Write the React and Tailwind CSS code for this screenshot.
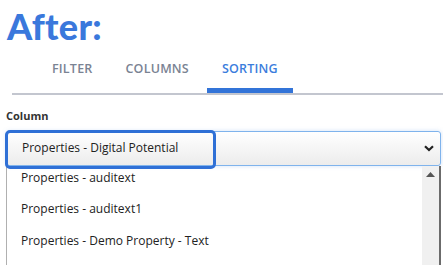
import React from "react";

const options = [
  "Properties - auditext",
  "Properties - auditext1",
  "Properties - Demo Property - Text",
];

function Tab({ label, active }) {
  return (
    <div className="relative px-[15px] h-[43px] pt-[10px]">
      <span
        className={`block leading-[17px] text-[12.5px] font-semibold tracking-[0.2px] ${
          active ? "text-[#3b7ddd]" : "text-[#7a8393]"
        }`}
      >
        {label}
      </span>
      {active && (
        <div className="absolute left-0 right-0 bottom-0 h-[5px] bg-[#3374d8]" />
      )}
    </div>
  );
}

export default function App() {
  return (
    <div
      className="w-[443px] h-[265px] bg-white overflow-hidden relative"
      style={{ fontFamily: '"Open Sans", "Noto Sans", sans-serif' }}
    >
      <h1
        className="pl-[7px] pt-[8px] h-[50px] text-[36px] leading-[36px] font-black text-[#3a78dc] tracking-[0.3px]"
        style={{ fontFamily: 'Lato, "Open Sans", sans-serif' }}
      >
        After:
      </h1>

      <div className="ml-[12px] border-b-2 border-[#c3c6cf] flex pl-[25px] gap-[3px]">
        <Tab label="FILTER" />
        <Tab label="COLUMNS" />
        <Tab label="SORTING" active />
      </div>

      <div className="pl-[6px] pr-[2px] pt-[14px]">
        <div className="text-[11px] font-bold text-[#333] leading-[14px]">
          Column
        </div>

        <div className="relative mt-[8px]">
          <div className="h-[35px] border border-[#7fb3ec] rounded-[3px] bg-gradient-to-b from-white to-[#ececec] flex items-center justify-between pl-[15px] pr-[6px] shadow-[0_0_4px_rgba(120,170,230,0.35)]">
            <span className="text-[12px] text-[#222] -mt-[2px]">
              Properties - Digital Potential
            </span>
            <svg width="10" height="7" viewBox="0 0 10 7">
              <path
                d="M1 1.2 L5 5 L9 1.2"
                fill="none"
                stroke="#222"
                strokeWidth="2.2"
              />
            </svg>
          </div>
          <div className="absolute left-[-1px] top-[-1px] w-[211px] h-[39px] border-[3px] border-[#2f70d6] rounded-[5px]" />

          <div className="h-[100px] border-l border-l-[#b0b0b0] border-r-2 border-r-[#6b6b6b] flex">
            <div className="flex-1 pl-[14px] -mt-[4px]">
              {options.map((o) => (
                <div
                  key={o}
                  className="h-[31.5px] flex items-center text-[12px] text-[#222]"
                >
                  {o}
                </div>
              ))}
            </div>
            <div className="w-[17px] bg-[#f0f0f0] flex justify-center pt-[6px]">
              <svg width="9" height="5" viewBox="0 0 9 5">
                <path d="M0 5 L4.5 0 L9 5 Z" fill="#555" />
              </svg>
            </div>
          </div>
        </div>
      </div>
    </div>
  );
}
